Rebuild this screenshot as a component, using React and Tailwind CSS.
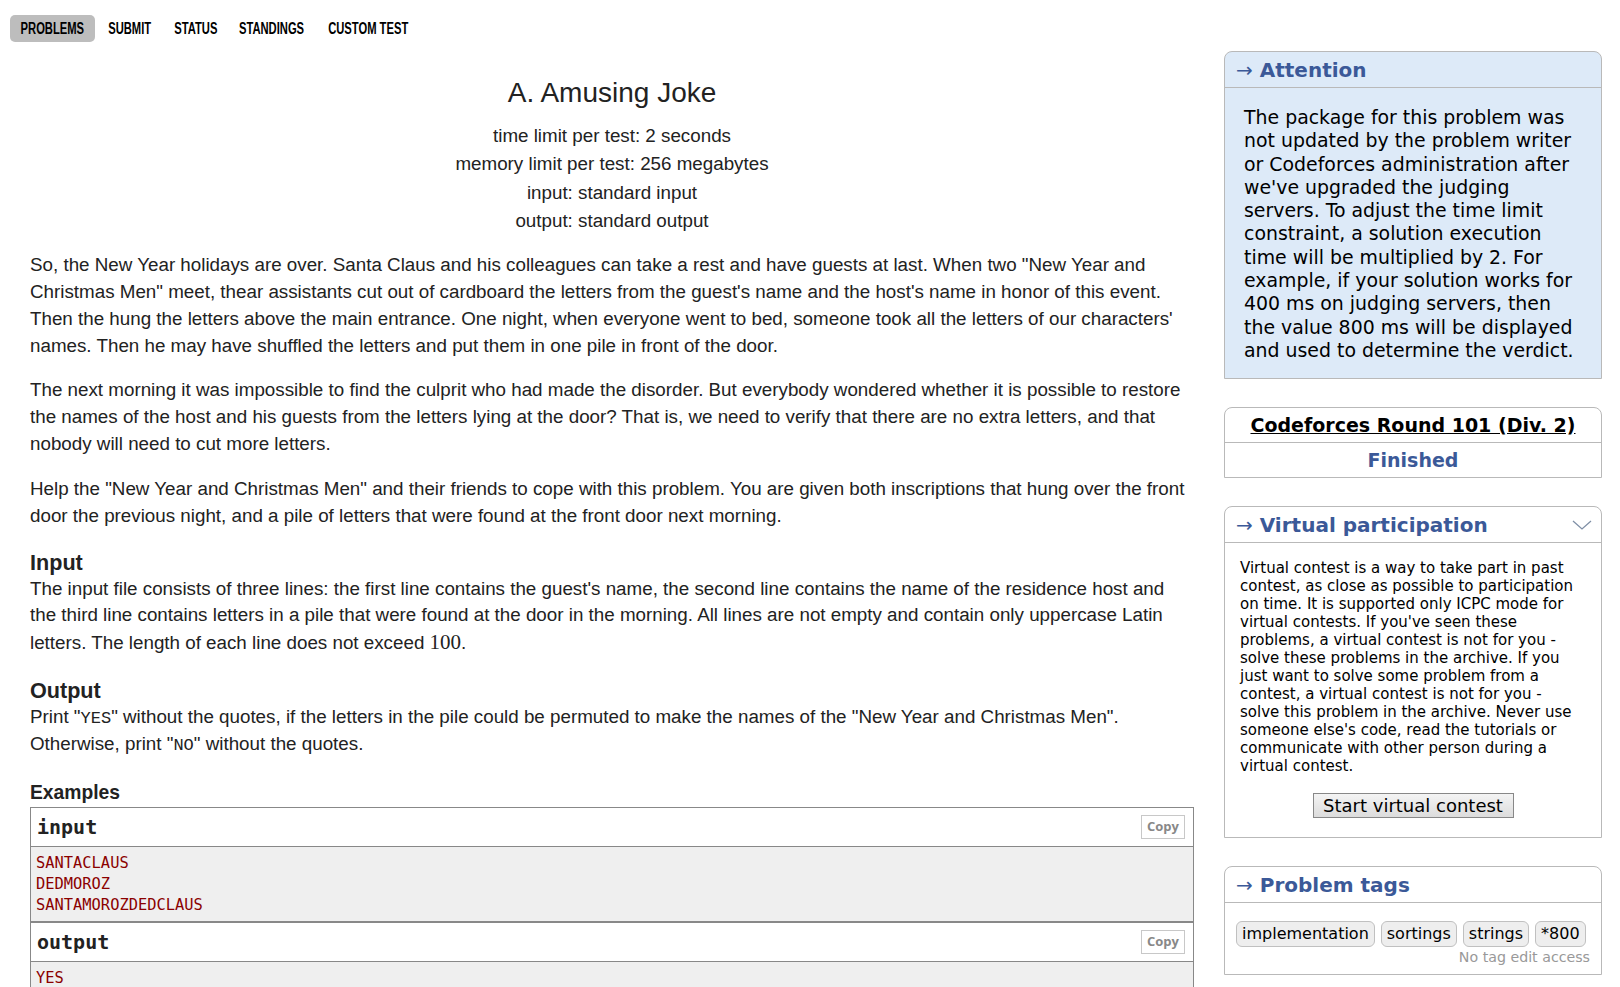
import React from 'react';

const arial = "font-['Liberation_Sans',Arial,sans-serif]";
const verdana = "font-['DejaVu_Sans',Verdana,sans-serif]";
const mono = "font-['DejaVu_Sans_Mono','Liberation_Mono',monospace]";

// label, item width (text is squeezed to look like a narrow font)
const navItems = [
  ['PROBLEMS', 'w-[85px] rounded-[5px] bg-[#bdbdbd]'],
  ['SUBMIT', 'w-[69px]'],
  ['STATUS', 'w-[63px]'],
  ['STANDINGS', 'w-[90px]'],
  ['CUSTOM TEST', 'w-[103px]'],
];

function Nav() {
  return (
    <div className={`${arial} flex items-center pt-[15px] pl-[10px] font-bold text-[16px] text-black`}>
      {navItems.map(([n, cls]) => (
        <span key={n} className={`h-[27px] flex items-center justify-center ${cls}`}>
          <span className="inline-block scale-x-[0.7] whitespace-nowrap">{n}</span>
        </span>
      ))}
    </div>
  );
}

function Sample({ label, lines }) {
  return (
    <div>
      <div className="h-[39px] flex items-center justify-between pl-[6px] pr-[8px] bg-white border-b border-[#888]">
        <span className={`${mono} font-bold text-[20px] text-[#222]`}>{label}</span>
        <span className="h-[24px] w-[44px] flex items-center justify-center border border-[#c8c8c8] text-[13px] font-bold text-[#888] font-['Open_Sans',sans-serif]">
          Copy
        </span>
      </div>
      <div className={`${mono} bg-[#efefef] text-[#8b0000] text-[15.4px] leading-[21px] pl-[5px] pt-[6px] pb-[5px]`}>
        {lines.map(l => (
          <div key={l}>{l}</div>
        ))}
      </div>
    </div>
  );
}

function Problem() {
  const tt = "font-['Liberation_Mono',monospace] text-[17px] leading-none";
  return (
    <div className={`${arial} ml-[30px] w-[1164px] text-[#222]`}>
      <div className="text-center">
        <div className="mt-[33px] text-[28px] leading-[36px]">A. Amusing Joke</div>
        <div className="mt-[11px] text-[18.8px] leading-[28.3px]">
          <div>time limit per test: 2 seconds</div>
          <div>memory limit per test: 256 megabytes</div>
          <div>input: standard input</div>
          <div>output: standard output</div>
        </div>
      </div>
      <div className="text-[18.8px] leading-[26.9px]">
        <p className="mt-[17px]">
          So, the New Year holidays are over. Santa Claus and his colleagues can take a rest and have guests at last. When two "New Year and Christmas Men" meet, thear assistants cut out of cardboard the letters from the guest's name and the host's name in honor of this event. Then the hung the letters above the main entrance. One night, when everyone went to bed, someone took all the letters of our characters' names. Then he may have shuffled the letters and put them in one pile in front of the door.
        </p>
        <p className="mt-[17.6px]">
          The next morning it was impossible to find the culprit who had made the disorder. But everybody wondered whether it is possible to restore the names of the host and his guests from the letters lying at the door? That is, we need to verify that there are no extra letters, and that nobody will need to cut more letters.
        </p>
        <p className="mt-[17.6px]">
          Help the "New Year and Christmas Men" and their friends to cope with this problem. You are given both inscriptions that hung over the front door the previous night, and a pile of letters that were found at the front door next morning.
        </p>
        <div className="mt-[20px] font-bold text-[21.6px] leading-[26px]">Input</div>
        <p>
          The input file consists of three lines: the first line contains the guest's name, the second line contains the name of the residence host and the third line contains letters in a pile that were found at the door in the morning. All lines are not empty and contain only uppercase Latin letters. The length of each line does not exceed{' '}
          <span className="font-['Liberation_Serif',serif] text-[21px]">100</span>.
        </p>
        <div className="mt-[21px] font-bold text-[21.6px] leading-[26px]">Output</div>
        <p>
          Print "<span className={tt}>YES</span>" without the quotes, if the letters in the pile could be permuted to make the names of the "New Year and Christmas Men". Otherwise, print "<span className={tt}>NO</span>" without the quotes.
        </p>
        <div className="mt-[24px] font-bold text-[19.3px] leading-[22px]">Examples</div>
      </div>
      <div className="mt-[3px] border border-[#888]">
        <Sample label="input" lines={['SANTACLAUS', 'DEDMOROZ', 'SANTAMOROZDEDCLAUS']} />
        <div className="border-t-2 border-[#888]">
          <Sample label="output" lines={['YES']} />
        </div>
      </div>
    </div>
  );
}

function Box({ title, children, className = '', chevron }) {
  return (
    <div className={`border border-[#b9b9b9] rounded-t-[8px] ${className}`}>
      <div className="h-[36px] flex items-center justify-between pl-[11px] pr-[8px] border-b border-[#b9b9b9]">
        <span className="font-bold text-[20px] text-[#3b5998]">
          <span className="font-normal">→</span> {title}
        </span>
        {chevron && (
          <svg width="20" height="10" viewBox="0 0 20 10" className="mr-[1px]">
            <path d="M1 1 L10 9 L19 1" fill="none" stroke="#7f8fa6" strokeWidth="1.3" />
          </svg>
        )}
      </div>
      {children}
    </div>
  );
}

function Sidebar() {
  return (
    <div className={`${verdana} ml-[30px] mt-[9px] w-[378px] text-[#222] flex flex-col`}>
      <Box title="Attention" className="bg-[#ddeaf8]">
        <div className="pl-[19px] pr-[24px] pt-[18px] pb-[16px] text-[18.9px] leading-[23.3px] text-black">
          The package for this problem was not updated by the problem writer or Codeforces administration after we've upgraded the judging servers. To adjust the time limit constraint, a solution execution time will be multiplied by 2. For example, if your solution works for 400 ms on judging servers, then the value 800 ms will be displayed and used to determine the verdict.
        </div>
      </Box>
      <div className="mt-[28px] border border-[#b9b9b9] rounded-t-[8px] text-center font-bold text-[19px]">
        <div className="h-[35px] flex items-center justify-center border-b border-[#b9b9b9]">
          <span className="underline text-black">Codeforces Round 101 (Div. 2)</span>
        </div>
        <div className="h-[34px] flex items-center justify-center text-[#3b5998]">Finished</div>
      </div>
      <Box title="Virtual participation" className="mt-[28px]" chevron>
        <div className="pl-[15px] pr-[20px] pt-[16px] text-[15px] leading-[18px] text-black">
          Virtual contest is a way to take part in past contest, as close as possible to participation on time. It is supported only ICPC mode for virtual contests. If you've seen these problems, a virtual contest is not for you - solve these problems in the archive. If you just want to solve some problem from a contest, a virtual contest is not for you - solve this problem in the archive. Never use someone else's code, read the tutorials or communicate with other person during a virtual contest.
        </div>
        <div className="flex justify-center pt-[18px] pb-[19px]">
          <span className="h-[25px] w-[201px] flex items-center justify-center border border-[#888] bg-gradient-to-b from-[#f4f4f4] to-[#dcdcdc] text-[18px] text-black">
            Start virtual contest
          </span>
        </div>
      </Box>
      <Box title="Problem tags" className="mt-[28px]">
        <div className="px-[11px] pt-[18px] pb-[8px]">
          <div className="flex gap-[6px] text-[16px] text-black">
            {['implementation', 'sortings', 'strings', '*800'].map(t => (
              <span key={t} className="h-[26px] px-[5px] flex items-center rounded-[6px] border border-[#c0c0c0] bg-[#eeeeee]">
                {t}
              </span>
            ))}
          </div>
          <div className="text-right text-[14.2px] text-[#999] mt-[1px] leading-[18px]">No tag edit access</div>
        </div>
      </Box>
    </div>
  );
}

export default function App() {
  return (
    <div className="w-[1620px] h-[987px] overflow-hidden bg-white flex items-start">
      <div className="flex flex-col">
        <Nav />
        <Problem />
      </div>
      <div className="pt-[42px]">
        <Sidebar />
      </div>
    </div>
  );
}
